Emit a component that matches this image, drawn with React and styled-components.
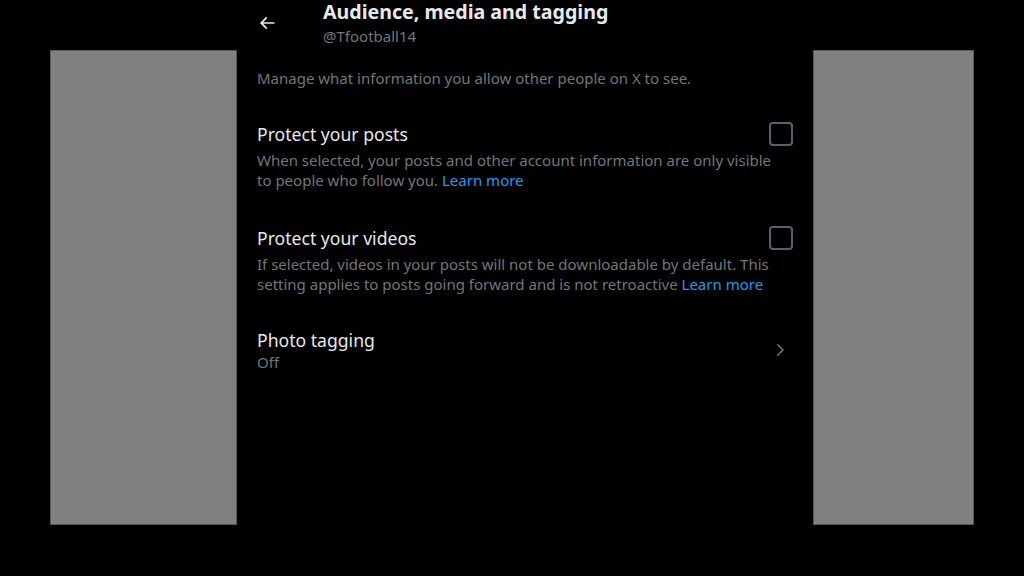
import React from 'react';
import styled, {createGlobalStyle} from 'styled-components';

const GlobalStyle = createGlobalStyle`
  html, body {
    margin: 0;
    padding: 0;
    background: #000;
  }
  body {
    font-family: "Noto Sans", "Open Sans", sans-serif;
    color: #e7e9ea;
  }
`;

const Page = styled.div`
  width: 1024px;
  height: 576px;
  background: #000;
  display: flex;
  align-items: flex-start;
  overflow: hidden;
`;

const SidePanel = styled.div`
  flex: none;
  width: ${(p) => p.$width}px;
  height: 475px;
  margin-top: 50px;
  margin-left: ${(p) => p.$left || 0}px;
  background: #808080;
  border: 1px solid #595959;
  box-sizing: border-box;
`;

const Column = styled.main`
  flex: none;
  width: 576px;
  display: flex;
  flex-direction: column;
`;

const Header = styled.header`
  display: flex;
  align-items: flex-start;
  padding: 0 20px;
  height: 47px;
`;

const BackButton = styled.button`
  flex: none;
  width: 66px;
  height: 40px;
  padding: 0;
  margin-top: 3px;
  border: none;
  background: none;
  color: #e7e9ea;
  display: flex;
  align-items: center;
  justify-content: flex-start;
  svg {
    width: 20px;
    height: 20px;
  }
`;

const HeaderText = styled.div`
  display: flex;
  flex-direction: column;
`;

const Title = styled.h1`
  margin: 0;
  font-size: 19.6px;
  line-height: 24px;
  font-weight: 700;
  color: #e7e9ea;
  white-space: nowrap;
`;

const Handle = styled.div`
  margin-top: 2px;
  font-size: 15px;
  line-height: 20px;
  color: #71767b;
`;

const Intro = styled.p`
  margin: 21px 0 16px;
  padding: 0 20px;
  font-size: 15px;
  line-height: 20px;
  color: #71767b;
`;

const Item = styled.div`
  padding: ${(p) => (p.$link ? '16px 20px 14px' : '18px 20px')};
  display: flex;
  align-items: ${(p) => (p.$link ? 'center' : 'stretch')};
  gap: 12px;
`;

const ItemBody = styled.div`
  flex: 1;
  display: flex;
  flex-direction: column;
`;

const ItemHead = styled.div`
  display: flex;
  align-items: center;
  justify-content: space-between;
`;

const ItemTitle = styled.span`
  font-size: 17.6px;
  line-height: 24px;
  color: #e7e9ea;
`;

const ItemText = styled.span`
  margin-top: ${(p) => (p.$tight ? 0 : 4)}px;
  padding-right: ${(p) => (p.$tight ? 0 : 12)}px;
  font-size: 15px;
  line-height: 20px;
  color: #71767b;
`;

const Learn = styled.a`
  color: #1d9bf0;
  text-decoration: none;
`;

const Checkbox = styled.span`
  flex: none;
  width: 24px;
  height: 24px;
  box-sizing: border-box;
  border: 2px solid #536471;
  border-radius: 4px;
`;

const Chevron = styled.span`
  flex: none;
  color: #71767b;
  display: flex;
  margin-right: 4px;
  svg {
    width: 18px;
    height: 18px;
  }
`;

export default function App() {
  return (
    <>
      <GlobalStyle />
      <Page>
        <SidePanel $left={50} $width={187} />
        <Column>
          <Header>
            <BackButton aria-label="Back">
              <svg viewBox="0 0 24 24" fill="currentColor">
                <path d="M7.414 13l5.043 5.04-1.414 1.42L3.586 12l7.457-7.46 1.414 1.42L7.414 11H21v2H7.414z" />
              </svg>
            </BackButton>
            <HeaderText>
              <Title>Audience, media and tagging</Title>
              <Handle>@Tfootball14</Handle>
            </HeaderText>
          </Header>
          <Intro>Manage what information you allow other people on X to see.</Intro>
          <Item>
            <ItemBody>
              <ItemHead>
                <ItemTitle>Protect your posts</ItemTitle>
                <Checkbox />
              </ItemHead>
              <ItemText>
                When selected, your posts and other account information are only visible to people who
                follow you. <Learn href="#">Learn more</Learn>
              </ItemText>
            </ItemBody>
          </Item>
          <Item>
            <ItemBody>
              <ItemHead>
                <ItemTitle>Protect your videos</ItemTitle>
                <Checkbox />
              </ItemHead>
              <ItemText>
                If selected, videos in your posts will not be downloadable by default. This setting
                applies to posts going forward and is not retroactive <Learn href="#">Learn more</Learn>
              </ItemText>
            </ItemBody>
          </Item>
          <Item $link>
            <ItemBody>
              <ItemTitle>Photo tagging</ItemTitle>
              <ItemText $tight>Off</ItemText>
            </ItemBody>
            <Chevron>
              <svg viewBox="0 0 24 24" fill="currentColor">
                <path d="M14.586 12L7.543 4.96l1.414-1.42L17.414 12l-8.457 8.46-1.414-1.42L14.586 12z" />
              </svg>
            </Chevron>
          </Item>
        </Column>
        <SidePanel $width={161} />
      </Page>
    </>
  );
}
